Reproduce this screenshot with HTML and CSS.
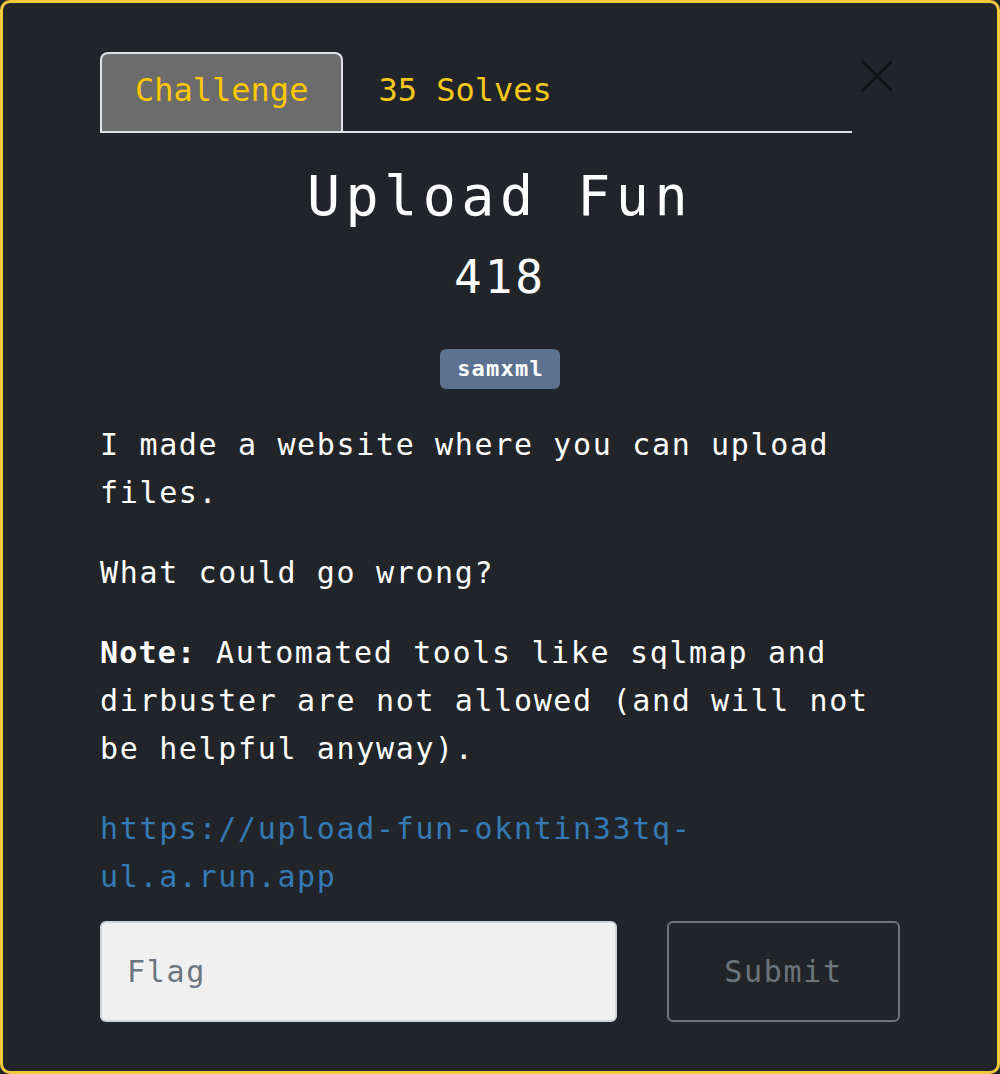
FILE: index.html
```html
<!DOCTYPE html>
<html>
<head>
<meta charset="utf-8">
<link rel="stylesheet" href="styles.css">
</head>
<body>
<div class="modal">
  <div class="header">
    <ul class="tabs">
      <li class="tab active">Challenge</li>
      <li class="tab">35 Solves</li>
    </ul>
    <div class="close">
      <svg width="32" height="32" viewBox="0 0 32 32"><path d="M2 2 L30 30 M30 2 L2 30" stroke="#111316" stroke-width="3" stroke-linecap="round" fill="none"/></svg>
    </div>
  </div>
  <h1 class="title">Upload Fun</h1>
  <div class="value">418</div>
  <div class="tags"><span class="badge">samxml</span></div>
  <div class="desc">
    <p>I made a website where you can upload files.</p>
    <p>What could go wrong?</p>
    <p><strong class="note">Note:</strong> Automated tools like sqlmap and dirbuster are not allowed (and will not be helpful anyway).</p>
    <p><a class="link" href="#">https://upload-fun-okntin33tq-ul.a.run.app</a></p>
  </div>
  <form class="form">
    <input class="flag" type="text" placeholder="Flag">
    <button class="submit" type="button">Submit</button>
  </form>
</div>
</body>
</html>
```
FILE: styles.css
```css
html, body {
  margin: 0;
  padding: 0;
  background: #212529;
}
.modal {
  box-sizing: border-box;
  width: 1000px;
  height: 1074px;
  border: 3px solid #f4c93c;
  border-radius: 10px;
  background: #212529;
  padding: 49px 97px 0 97px;
  font-family: "DejaVu Sans Mono", monospace;
  color: #ffffff;
}
.header {
  display: flex;
  align-items: flex-start;
}
.tabs {
  flex: 1;
  display: flex;
  list-style: none;
  margin: 0;
  padding: 0;
  border-bottom: 2px solid #dee2e6;
}
.tab {
  font-size: 32px;
  line-height: 72px;
  padding: 0 33px 5px 33px;
  border: 2px solid transparent;
  border-bottom: none;
  border-radius: 8px 8px 0 0;
  color: #f7c81c;
}
.tab.active {
  background: #6c6c6c;
  border-color: #dee2e6;
  color: #ffc800;
}
.close {
  width: 48px;
  display: flex;
  justify-content: flex-end;
  padding-top: 8px;
  padding-right: 7px;
  box-sizing: border-box;
}
.close svg {
  display: block;
}
.title {
  margin: 30px 0 0 0;
  font-size: 55px;
  line-height: 66px;
  font-weight: normal;
  letter-spacing: 5.5px;
  text-align: center;
}
.value {
  margin-top: 21px;
  font-size: 46px;
  line-height: 55px;
  letter-spacing: 3px;
  text-align: center;
}
.tags {
  margin-top: 44px;
  text-align: center;
  height: 40px;
}
.badge {
  display: inline-block;
  background: #5c7290;
  color: #ffffff;
  font-weight: bold;
  font-size: 22px;
  line-height: 40px;
  height: 40px;
  padding: 0 16px 0 17px;
  border-radius: 6px;
  letter-spacing: 1.2px;
}
.desc {
  margin-top: 32px;
  font-size: 30px;
  line-height: 48px;
  letter-spacing: 1.65px;
}
.desc p {
  margin: 0 0 32px 0;
}
.desc p:last-child {
  margin-bottom: 0;
}
.note {
  letter-spacing: 1.2px;
}
.link {
  color: #337ab7;
  text-decoration: none;
}
.form {
  margin-top: 20px;
  display: flex;
  justify-content: space-between;
}
.flag {
  box-sizing: border-box;
  width: 517px;
  height: 101px;
  background: #f0f0f0;
  border: 2px solid #ced4da;
  border-radius: 6px;
  padding: 0 0 0 25px;
  font-family: "DejaVu Sans Mono", monospace;
  font-size: 30px;
  letter-spacing: 1.65px;
  color: #495057;
  outline: none;
}
.flag::placeholder {
  color: #6c757d;
}
.submit {
  box-sizing: border-box;
  width: 233px;
  height: 101px;
  background: transparent;
  border: 2px solid #6c757d;
  border-radius: 6px;
  color: #6c757d;
  font-family: "DejaVu Sans Mono", monospace;
  font-size: 30px;
  letter-spacing: 1.65px;
}
```
